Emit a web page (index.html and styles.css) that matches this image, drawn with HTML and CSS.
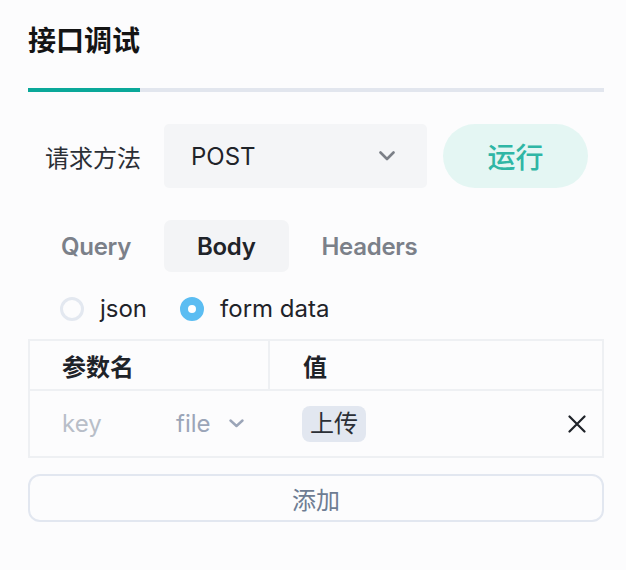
FILE: index.html
```html
<!DOCTYPE html>
<html lang="zh-CN">
<head>
<meta charset="utf-8">
<title>接口调试</title>
<link rel="stylesheet" href="styles.css">
</head>
<body>
<div class="page">
  <h1 class="title">接口调试</h1>
  <div class="tabline"><div class="tabline-active"></div></div>

  <div class="method-row">
    <span class="label">请求方法</span>
    <div class="select">
      <span class="select-value">POST</span>
      <svg class="chev" width="16" height="10" viewBox="0 0 16 10"><polyline points="1.5,1.5 8,8 14.5,1.5" fill="none" stroke="#7b7f87" stroke-width="2.6" stroke-linecap="round" stroke-linejoin="round"/></svg>
    </div>
    <button class="run">运行</button>
  </div>

  <div class="tabs">
    <div class="tab">Query</div>
    <div class="tab active">Body</div>
    <div class="tab">Headers</div>
  </div>

  <div class="radios">
    <label class="radio"><span class="dot"></span><span>json</span></label>
    <label class="radio checked"><span class="dot"></span><span>form data</span></label>
  </div>

  <div class="table">
    <div class="thead">
      <div class="th c1">参数名</div>
      <div class="th c2">值</div>
    </div>
    <div class="trow">
      <div class="td c1">
        <span class="key">key</span>
        <span class="type">file</span>
        <svg class="chev-sm" width="15" height="9" viewBox="0 0 15 9"><polyline points="1.5,1.5 7.5,7 13.5,1.5" fill="none" stroke="#9ba5b8" stroke-width="2.4" stroke-linecap="round" stroke-linejoin="round"/></svg>
      </div>
      <div class="td c2">
        <span class="tag">上传</span>
        <svg class="close" width="18" height="18" viewBox="0 0 18 18"><path d="M1.5 1.5 L16.5 16.5 M16.5 1.5 L1.5 16.5" stroke="#1f2329" stroke-width="2.2" stroke-linecap="round"/></svg>
      </div>
    </div>
  </div>

  <button class="add">添加</button>
</div>
</body>
</html>
```

FILE: styles.css
```css
* { box-sizing: border-box; }
html, body { margin: 0; padding: 0; }
body {
  background: #fcfcfd;
  font-family: "Inter", "Noto Sans CJK SC", sans-serif;
  color: #1f2329;
}
.page {
  width: 626px;
  padding: 21px 22px 0 28px;
}
.title {
  margin: 0;
  font-size: 28px;
  line-height: 40px;
  font-weight: 700;
  color: #141414;
}
.tabline {
  margin-top: 27px;
  height: 4px;
  background: #e2e6ee;
  display: flex;
}
.tabline-active {
  width: 112px;
  background: #0aa899;
}
.method-row {
  margin-top: 32px;
  display: flex;
  align-items: center;
  height: 64px;
}
.label {
  font-size: 24px;
  color: #2b2f36;
  padding-left: 17px;
  width: 136px;
}
.select {
  width: 263px;
  height: 64px;
  background: #f4f5f7;
  border-radius: 5px;
  display: flex;
  align-items: center;
  justify-content: space-between;
  padding: 0 32px 0 27px;
}
.select-value {
  font-size: 24px;
  color: #1f2329;
}
.chev { display: block; }
.run {
  margin-left: 16px;
  width: 145px;
  height: 64px;
  border: none;
  border-radius: 32px;
  background: #e4f6f3;
  color: #2fb6a5;
  font-family: inherit;
  font-size: 28px;
  font-weight: 500;
  padding: 0;
}
.tabs {
  margin-top: 32px;
  display: flex;
  height: 52px;
}
.tab {
  padding: 0 33px;
  display: flex;
  align-items: center;
  font-size: 24px;
  font-weight: 600;
  letter-spacing: -0.3px;
  color: #7b8089;
  border-radius: 7px;
}
.tab.active {
  background: #f3f4f6;
  color: #1f2329;
}
.radios {
  margin-top: 25px;
  padding-left: 32px;
  display: flex;
  gap: 33px;
  height: 24px;
}
.radio {
  display: flex;
  align-items: center;
  gap: 16px;
  font-size: 24px;
  line-height: 24px;
  color: #1f2329;
}
.dot {
  width: 24px;
  height: 24px;
  border-radius: 50%;
  border: 3.5px solid #e3e8f0;
  background: #fcfcfd;
}
.radio.checked .dot {
  border: 8px solid #5bbdf2;
  background: #ffffff;
}
.table {
  margin-top: 18px;
  border: 2px solid #eef0f3;
  width: 576px;
}
.thead, .trow {
  display: grid;
  grid-template-columns: 240px 1fr;
}
.thead {
  height: 50px;
  border-bottom: 2px solid #eef0f3;
}
.th {
  display: flex;
  align-items: center;
  padding-left: 32px;
  font-size: 24px;
  font-weight: 700;
  color: #1f2329;
}
.th.c1 { border-right: 2px solid #eef0f3; }
.th.c2 { padding-left: 33px; }
.trow { height: 65px; }
.td {
  display: flex;
  align-items: center;
  font-size: 24px;
}
.td.c1 { padding-left: 32px; }
.key {
  width: 114px;
  color: #b8bec8;
}
.type {
  color: #9ba5b8;
  margin-right: 18px;
}
.chev-sm { display: block; }
.td.c2 {
  padding-left: 32px;
  padding-right: 16px;
  justify-content: space-between;
}
.tag {
  background: #e2e7f0;
  border-radius: 8px;
  padding: 0 8px;
  height: 36px;
  line-height: 36px;
  color: #2b2f36;
}
.close { display: block; }
.add {
  margin-top: 16px;
  width: 576px;
  height: 48px;
  border: 2px solid #e2e7f0;
  border-radius: 12px;
  background: transparent;
  font-family: inherit;
  font-size: 24px;
  color: #6e7c93;
  padding: 0;
}
```
